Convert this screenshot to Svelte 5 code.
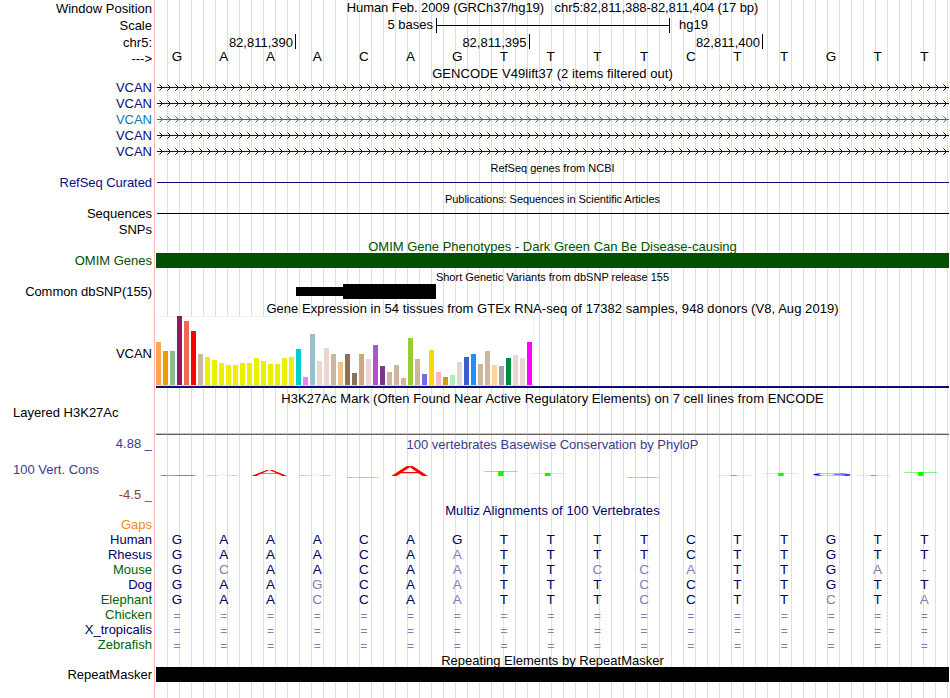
<script>
  const bases = 'GAAACAGTTTTCTTGTT'.split('')

  const transcripts = ['coding', 'coding', 'noncoding', 'coding', 'coding']

  const species = [
    { name: 'Human', seq: 'GAAACAGTTTTCTTGTT' },
    { name: 'Rhesus', seq: 'GAAACAATTTTCTTGTT' },
    { name: 'Mouse', seq: 'GCAACAATTCCATTGA-', green: true },
    { name: 'Dog', seq: 'GAAGCAATTTCCTTGTT' },
    { name: 'Elephant', seq: 'GAACCAATTTCCTTCTA', green: true },
    { name: 'Chicken', seq: '=================', green: true },
    { name: 'X_tropicalis', seq: '=================' },
    { name: 'Zebrafish', seq: '=================', green: true }
  ]

  // one entry per GTEx tissue: [height, color]
  const tissues = [
    [43, '#ffa54f'], [34, '#ee9a00'], [34, '#8fbc8f'], [69, '#8b1c62'], [64, '#ee6a50'], [54, '#ff0000'],
    [31, '#cdb79e'], [28, '#eeee00'], [25, '#eeee00'], [22, '#eeee00'], [20, '#eeee00'], [20, '#eeee00'],
    [22, '#eeee00'], [22, '#eeee00'], [27, '#eeee00'], [24, '#eeee00'], [21, '#eeee00'], [21, '#eeee00'],
    [27, '#eeee00'], [28, '#eeee00'], [36, '#00cdcd'], [8, '#ee82ee'], [51, '#9ac0cd'], [24, '#eed5d2'],
    [37, '#eed5d2'], [31, '#cdb79e'], [23, '#eec591'], [31, '#8b7355'], [12, '#8b7355'], [31, '#cdaa7d'],
    [26, '#eed5d2'], [40, '#b452cd'], [19, '#7a378b'], [13, '#cdb79e'], [20, '#cdb79e'], [7, '#cdb79e'],
    [47, '#9acd32'], [26, '#cdb79e'], [11, '#7a67ee'], [35, '#ffd700'], [13, '#ffb6c1'], [8, '#cd9b1d'],
    [10, '#b4eeb4'], [23, '#d9d9d9'], [28, '#3a5fcd'], [31, '#1e90ff'], [21, '#cdb79e'], [34, '#cdb79e'],
    [20, '#ffd39b'], [19, '#a6a6a6'], [27, '#008b45'], [30, '#eed5d2'], [27, '#eed5d2'], [43, '#ff00ff']
  ]

  // ink start and ink width of each base in a 100px font
  const ink = { A: [0.3, 66], C: [5, 64], G: [5, 67], T: [2, 57] }
  const colors = { A: '#ff0000', C: '#a0a000', G: '#0000ff', T: '#00ff00' }

  // PhyloP letters, stretched to their score
  const logo = [
    { base: 'G', x: 3, w: 38, h: 0.8 },
    { base: 'A', x: 49, w: 35, h: 1.3 },
    { base: 'A', x: 95.5, w: 36, h: 6.5 },
    { base: 'A', x: 142, w: 35, h: 0.7 },
    { base: 'C', x: 190.5, w: 35, h: -0.9 },
    { base: 'A', x: 235.5, w: 36.5, h: 10.5 },
    { base: 'T', x: 328, w: 33.5, h: 5 },
    { base: 'T', x: 375, w: 33.5, h: 2.2 },
    { base: 'C', x: 470.5, w: 35, h: -0.9 },
    { base: 'T', x: 561, w: 33.5, h: 1 },
    { base: 'T', x: 608, w: 33.5, h: 3 },
    { base: 'G', x: 657, w: 38, h: 3 },
    { base: 'T', x: 701, w: 33.5, h: 1 },
    { base: 'T', x: 748, w: 33.5, h: 4 }
  ]

  function stretch({ base, x, w, h }) {
    const [start, width] = ink[base]
    const sx = w / width
    const y = h < 0 ? 25 : 24
    return `translate(${x - start * sx} ${y}) scale(${sx} ${h / 69})`
  }

  function isMismatch(letter, i) {
    return letter !== bases[i]
  }
</script>

{#snippet title(text, kind = '')}
  <div class="row">
    <div class="label"></div>
    <div class="track title {kind}">{text}</div>
  </div>
{/snippet}

<div class="browser">
  <div class="row h16">
    <div class="label">Window Position</div>
    <div class="track title position">Human Feb. 2009 (GRCh37/hg19) &nbsp; chr5:82,811,388-82,811,404 (17 bp)</div>
  </div>

  <div class="row h18">
    <div class="label">Scale</div>
    <div class="track scale">
      <span class="size">5 bases</span>
      <div class="ruler"></div>
      <span>hg19</span>
    </div>
  </div>

  <div class="row h16">
    <div class="label">chr5:</div>
    <div class="track ticks">
      {#each ['82,811,390', '82,811,395', '82,811,400'] as tick}
        <span>{tick}</span>
      {/each}
    </div>
  </div>

  <div class="row h16">
    <div class="label">---&gt;</div>
    <div class="track seq ref">
      {#each bases as base}
        <span>{base}</span>
      {/each}
    </div>
  </div>

  <div class="h14">{@render title('GENCODE V49lift37 (2 items filtered out)', 'wide')}</div>

  {#each transcripts as kind, i}
    <div class="row h16 {kind}">
      <div class="label raised">VCAN</div>
      <svg class="track" width="793" height="16" shape-rendering="crispEdges">
        <pattern id="strand{i}" x="3" width="8" height="16" patternUnits="userSpaceOnUse">
          <path d="M1 5h1v1h-1zM2 6h1v1h-1zM3 7h1v1h-1zM2 8h1v1h-1zM1 9h1v1h-1z" fill="currentColor" />
          <path d="M0 4h1v1h-1zM0 10h1v1h-1z" fill="currentColor" opacity="0.5" />
        </pattern>
        <rect x="3" width="790" height="16" fill="url(#strand{i})" />
        <rect x="1" y="7" width="792" height="1" fill="currentColor" />
      </svg>
    </div>
  {/each}

  <div class="h16">{@render title('RefSeq genes from NCBI', 'small')}</div>
  <div class="row h14 coding">
    <div class="label tight raised">RefSeq Curated</div>
    <div class="track"><div class="line"></div></div>
  </div>

  <div class="h17">{@render title('Publications: Sequences in Scientific Articles', 'small tight')}</div>
  <div class="row h14">
    <div class="label raised">Sequences</div>
    <div class="track"><div class="line"></div></div>
  </div>
  <div class="row h17">
    <div class="label">SNPs</div>
    <div class="track"></div>
  </div>

  <div class="h15">{@render title('OMIM Gene Phenotypes - Dark Green Can Be Disease-causing', 'omim lowered')}</div>
  <div class="row h15 omim">
    <div class="label">OMIM Genes</div>
    <div class="track block"></div>
  </div>

  <div class="h16">{@render title('Short Genetic Variants from dbSNP release 155', 'small lowered')}</div>
  <div class="row h15">
    <div class="label tight">Common dbSNP(155)</div>
    <div class="track snps">
      <div class="thin"></div>
      <div class="thick"></div>
    </div>
  </div>

  <div class="h17">{@render title('Gene Expression in 54 tissues from GTEx RNA-seq of 17382 samples, 948 donors (V8, Aug 2019)', 'wide lowered')}</div>
  <div class="row gtex">
    <div class="label lowered">VCAN</div>
    <div class="track">
      <div class="bars">
        {#each tissues as [height, color]}
          <div class="bar" style:height="{height}px" style:background={color}></div>
        {/each}
      </div>
      <div class="model"></div>
    </div>
  </div>

  <div class="row histone">
    <div class="label left">Layered H3K27Ac</div>
    <div class="track title wide">H3K27Ac Mark (Often Found Near Active Regulatory Elements) on 7 cell lines from ENCODE</div>
  </div>

  <div class="row cons">
    <div class="label limits">
      <span class="max">4.88 _</span>
      <span class="left">100 Vert. Cons</span>
      <span class="min">-4.5 _</span>
    </div>
    <div class="track">
      <div class="title lowered">100 vertebrates Basewise Conservation by PhyloP</div>
      <svg width="793" height="48">
        {#each logo as letter}
          <text transform={stretch(letter)} fill={colors[letter.base]}>{letter.base}</text>
        {/each}
      </svg>
    </div>
  </div>

  <div class="h15 multiz">{@render title('Multiz Alignments of 100 Vertebrates', 'wider lowered')}</div>
  <div class="row h15">
    <div class="label gaps">Gaps</div>
    <div class="track"></div>
  </div>
  {#each species as { name, seq, green }}
    <div class="row h15 multiz">
      <div class="label" class:green>{name}</div>
      <div class="track seq">
        {#each seq.split('') as letter, i}
          <span class:mismatch={isMismatch(letter, i)} class:gap={letter === '='}>{letter}</span>
        {/each}
      </div>
    </div>
  {/each}

  <div class="h15">{@render title('Repeating Elements by RepeatMasker', 'lowered')}</div>
  <div class="row h15">
    <div class="label">RepeatMasker</div>
    <div class="track block"></div>
  </div>
</div>

<style>
  :global(body) {
    margin: 0;
    background: #fff;
  }

  /* red divider, white label column, guidelines every 12px */
  .browser {
    width: 949px;
    height: 698px;
    overflow: hidden;
    font-family: "Liberation Sans", Arial, sans-serif;
    font-size: 13px;
    color: #000;
    white-space: nowrap;
    background-image:
      linear-gradient(#ffb4b4, #ffb4b4),
      linear-gradient(#fff, #fff),
      linear-gradient(to right, #dcdcff 1px, transparent 1px);
    background-size: 1px 100%, 156px 100%, 12px 100%;
    background-position: 154px 0, 0 0, 167px 0;
    background-repeat: no-repeat, no-repeat, repeat-x;
  }

  .label {
    width: 152px;
    margin-right: 4px;
    flex-shrink: 0;
    display: flex;
    align-items: center;
    justify-content: flex-end;
  }

  .row {
    display: flex;
    height: 100%;
  }

  .track {
    width: 793px;
    flex-shrink: 0;
  }

  .title {
    display: flex;
    align-items: center;
    justify-content: center;
  }

  .small {
    font-size: 11px;
  }

  .tight { letter-spacing: -0.06px; }
  .wide { letter-spacing: 0.055px; }
  .wider { letter-spacing: 0.1px; }

  .raised {
    box-sizing: border-box;
    padding-bottom: 2px;
  }

  .lowered {
    box-sizing: border-box;
    padding-top: 2px;
  }

  .position {
    box-sizing: border-box;
    padding-bottom: 2px;
    letter-spacing: -0.075px;
  }

  .h14 { height: 14px; }
  .h15 { height: 15px; }
  .h16 { height: 16px; }
  .h17 { height: 17px; }
  .h18 { height: 18px; }

  .h16.row,
  .h15.row,
  .h14.row,
  .h17.row,
  .h18.row {
    flex-shrink: 0;
  }

  .coding { color: #0c0c78; }
  .noncoding { color: #0c78b4; }
  .omim { color: #005000; }
  .multiz { color: #000064; }
  .green { color: #006400; }
  .gaps { color: #f08c14; }

  .scale {
    display: flex;
    align-items: center;
    line-height: 15px;
  }

  .scale span {
    margin-bottom: 2px;
  }

  .size {
    width: 277px;
    margin-right: 3px;
    text-align: right;
  }

  .ruler {
    width: 232px;
    height: 15px;
    margin-right: 9px;
    border: solid #000;
    border-width: 0 1px;
    background: linear-gradient(#000, #000) 0 7px / 100% 1px no-repeat;
  }

  .ticks {
    display: flex;
  }

  .ticks span {
    box-sizing: border-box;
    width: 233.5px;
    height: 15px;
    padding-right: 2px;
    border-right: 1px solid #000;
    line-height: 17px;
    text-align: right;
  }

  .ticks span:first-child {
    width: 140px;
  }

  .seq {
    display: flex;
    width: 794px;
    margin-left: -2.3px;
  }

  .seq span {
    flex: 1;
    font-size: 13.5px;
    line-height: 15px;
    text-align: center;
  }

  .ref span {
    line-height: 14px;
  }

  .seq .mismatch {
    color: #8080b4;
  }

  .seq .gap {
    font-size: 12px;
    line-height: 18px;
  }

  .line {
    height: 1px;
    margin: 6px 0 0 1px;
    background: currentColor;
  }

  .block {
    background: currentColor;
  }

  .snps {
    display: flex;
    align-items: center;
  }

  .thin {
    width: 47px;
    height: 9px;
    margin-left: 140px;
    background: #000;
  }

  .thick {
    width: 93px;
    height: 15px;
    background: #000;
  }

  .gtex {
    height: 72px;
  }

  .bars {
    box-sizing: border-box;
    width: 378px;
    height: 70px;
    display: flex;
    align-items: flex-end;
    gap: 2px;
    background: #fff;
    border-bottom: 1px solid #dcdcdc;
    box-shadow: inset 1px 1px #f2f2f2, inset -1px 0 #f2f2f2;
  }

  .bar {
    width: 5px;
  }

  .model {
    height: 2px;
    background: #0c0c78;
  }

  .histone {
    height: 47px;
  }

  .histone .label {
    height: 49px;
  }

  .histone .track {
    box-sizing: border-box;
    align-items: flex-start;
    padding-top: 3px;
    border-bottom: 1px solid #5a6450;
    box-shadow: inset 0 -1px #64f0c8;
  }

  .left {
    align-self: flex-start;
    justify-content: flex-start;
    text-indent: 13px;
  }

  .cons {
    height: 67px;
    color: #3c3c8c;
  }

  .limits {
    flex-direction: column;
    align-items: flex-end;
    justify-content: space-between;
  }

  .max {
    padding-top: 1px;
  }

  .min {
    color: #8c3c3c;
  }

  .cons .title {
    height: 17px;
  }

  .cons svg {
    display: block;
  }

  .cons text {
    font-size: 100px;
  }
</style>
